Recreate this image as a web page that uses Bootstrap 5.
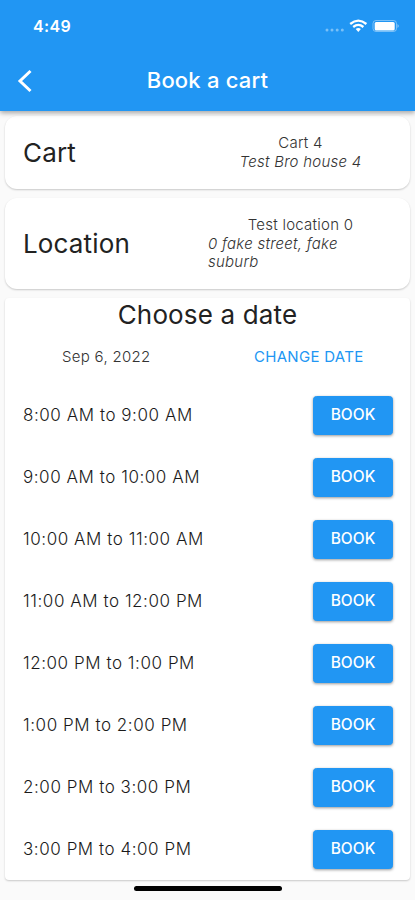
<!DOCTYPE html>
<html lang="en">
<head>
<meta charset="utf-8">
<meta name="viewport" content="width=device-width, initial-scale=1">
<title>Book a cart</title>
<link href="https://cdn.jsdelivr.net/npm/bootstrap@5.3.0/dist/css/bootstrap.min.css" rel="stylesheet">
<style>
body{font-family:Inter,"Liberation Sans",sans-serif;background:#fafafa;color:#222;width:415px;height:900px;overflow:hidden}
.app-top{height:111px;background:#2196f3;box-shadow:0 2px 5px rgba(0,0,0,.35);position:relative;z-index:2}
.status{height:50px;padding:1px 15px 0 33px}
.clock{font-size:16px;font-weight:600;letter-spacing:.35px}
.title-bar{height:61px;display:grid;grid-template-columns:50px 1fr 50px}
.page-title{font-size:22px;font-weight:500;letter-spacing:.2px}
.panel{border:0;border-radius:12px;margin:0 5px;box-shadow:0 1px 2px rgba(0,0,0,.2)}
.cart-panel{height:73px;margin-top:5px}
.place-panel{height:91px;margin-top:9px}
.slots-panel{height:582px;margin-top:9px;border-radius:4px}
.big{font-size:26px;line-height:32px;font-weight:400;letter-spacing:.15px}
.choose{padding-top:1px}
.label{padding-left:18px;width:203px}
.info{font-size:15px;line-height:18.7px;letter-spacing:.25px;color:#333;font-weight:300;width:185px}
.place-panel .info{padding-top:1px}
.date-row{height:53px;padding-bottom:1px}
.day{font-size:15px;letter-spacing:.3px;color:#333;font-weight:300}
.change{color:#2196f3;letter-spacing:.3px;font-size:15px}
.slot{height:62px;padding:0 17px 0 18px;font-size:17px;letter-spacing:.55px;font-weight:300;color:#1a1a1a}
.slot span{padding-top:1px}
.book-btn{--bs-btn-bg:#2196f3;--bs-btn-border-color:#2196f3;width:80px;height:39px;border-radius:3.5px;font-size:15.5px;font-weight:500;padding:0;box-shadow:0 1px 3px rgba(0,0,0,.4)}
.home-bar{width:148px;height:5px;border-radius:3px;background:#000;margin:6px auto 0}
</style>
</head>
<body>
<header class="app-top text-white">
  <div class="status d-flex align-items-center justify-content-between">
    <span class="clock">4:49</span>
    <svg width="76" height="18" viewBox="0 0 76 18" fill="#fff">
      <g opacity=".4"><circle cx="3" cy="13" r="1.500"/><circle cx="8" cy="13" r="1.500"/><circle cx="13.200" cy="13" r="1.500"/><circle cx="18.300" cy="13" r="1.500"/></g>
      <g fill="none" stroke="#fff" stroke-width="2.300"><path d="M26.200 7Q34.300.2 42.400 7"/><path d="M29.200 10Q34.300 5.800 39.400 10"/></g>
      <path d="M31.700 12Q34.300 10 36.900 12L34.300 14.900Z"/>
      <rect x="49" y="3.500" width="23.500" height="11" rx="3" fill="none" stroke="#fff" stroke-opacity=".4"/>
      <rect x="50.700" y="5" width="20" height="8.500" rx="1.500"/>
      <path d="M73.500 7Q76 9 73.500 11Z" opacity=".5"/>
    </svg>
  </div>
  <div class="title-bar align-items-center">
    <svg width="50" height="30" viewBox="0 0 50 30" fill="none" stroke="#fff" stroke-width="3"><path d="M30.500 5L20 15L30.500 25"/></svg>
    <div class="page-title text-center">Book a cart</div>
  </div>
</header>
<main>
  <section class="card panel cart-panel flex-row align-items-center">
    <div class="big label">Cart</div>
    <div class="info d-flex flex-column align-items-center"><span>Cart 4</span><em>Test Bro house 4</em></div>
  </section>
  <section class="card panel place-panel flex-row align-items-center">
    <div class="big label">Location</div>
    <div class="info d-flex flex-column"><span class="text-center">Test location 0</span><em>0 fake street, fake<br>suburb</em></div>
  </section>
  <section class="card panel slots-panel">
    <div class="big choose text-center">Choose a date</div>
    <div class="date-row d-flex align-items-center"><div class="day w-50 text-center">Sep 6, 2022</div><div class="change w-50 text-center">CHANGE DATE</div></div>
    <div class="slot d-flex align-items-center justify-content-between"><span>8:00 AM to 9:00 AM</span><button class="btn btn-primary book-btn">BOOK</button></div>
    <div class="slot d-flex align-items-center justify-content-between"><span>9:00 AM to 10:00 AM</span><button class="btn btn-primary book-btn">BOOK</button></div>
    <div class="slot d-flex align-items-center justify-content-between"><span>10:00 AM to 11:00 AM</span><button class="btn btn-primary book-btn">BOOK</button></div>
    <div class="slot d-flex align-items-center justify-content-between"><span>11:00 AM to 12:00 PM</span><button class="btn btn-primary book-btn">BOOK</button></div>
    <div class="slot d-flex align-items-center justify-content-between"><span>12:00 PM to 1:00 PM</span><button class="btn btn-primary book-btn">BOOK</button></div>
    <div class="slot d-flex align-items-center justify-content-between"><span>1:00 PM to 2:00 PM</span><button class="btn btn-primary book-btn">BOOK</button></div>
    <div class="slot d-flex align-items-center justify-content-between"><span>2:00 PM to 3:00 PM</span><button class="btn btn-primary book-btn">BOOK</button></div>
    <div class="slot d-flex align-items-center justify-content-between"><span>3:00 PM to 4:00 PM</span><button class="btn btn-primary book-btn">BOOK</button></div>
  </section>
  <div class="home-bar"></div>
</main>
<script src="https://cdn.jsdelivr.net/npm/bootstrap@5.3.0/dist/js/bootstrap.bundle.min.js"></script>
</body>
</html>
